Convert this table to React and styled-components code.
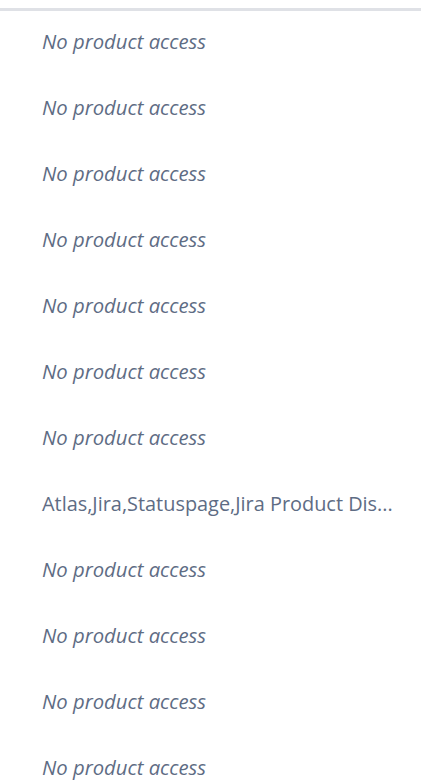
import React from 'react';
import styled, { createGlobalStyle } from 'styled-components';

const GlobalStyle = createGlobalStyle`
  body {
    margin: 0;
    background: #fff;
    font-family: "Open Sans", "Noto Sans", sans-serif;
  }
`;

const Table = styled.div`
  padding-top: 8px;
  width: 421px;
`;

const Body = styled.div`
  border-top: 3px solid #dfe1e6;
`;

const Row = styled.div`
  height: 66px;
  display: flex;
  align-items: center;
  padding-left: 42px;
  margin-top: ${(p) => (p.first ? '-3px' : '0')};
`;

const Products = styled.span`
  display: block;
  white-space: nowrap;
  font-size: ${(p) => (p.empty ? '20.3px' : '19.9px')};
  font-weight: 400;
  color: #5e6c84;
  font-style: ${(p) => (p.empty ? 'italic' : 'normal')};
`;

const rows = [
  null, null, null, null, null, null, null,
  'Atlas,Jira,Statuspage,Jira Product Dis...',
  null, null, null, null,
];

export default function App() {
  return (
    <>
      <GlobalStyle />
      <Table>
        <Body>
          {rows.map((products, i) => (
            <Row key={i} first={i === 0}>
              <Products empty={!products}>
                {products || 'No product access'}
              </Products>
            </Row>
          ))}
        </Body>
      </Table>
    </>
  );
}
